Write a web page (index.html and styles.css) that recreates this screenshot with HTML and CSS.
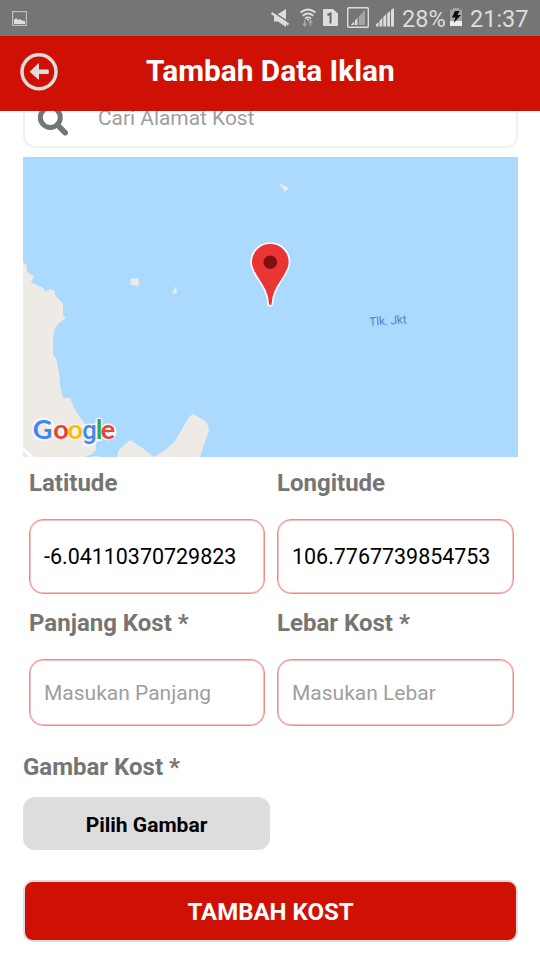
FILE: index.html
```html
<!DOCTYPE html>
<html lang="id">
<head>
<meta charset="utf-8">
<title>Tambah Data Iklan</title>
<link rel="stylesheet" href="styles.css">
</head>
<body>
<div class="status">
  <svg class="status-icons" width="396" height="36" viewBox="0 0 396 36">
    <rect x="12.6" y="11.6" width="13.8" height="13.8" fill="none" stroke="#bdbdbd" stroke-width="1.2"/>
    <path d="M14 24v-4l2-2 2 2 2-1 2 1.500 3 0.500v3z" fill="#ddd"/>
    <path d="M274 14h4l8-5v18l-8-5.500h-4z" fill="#ddd"/>
    <path d="M272 11.300l17 11" stroke="#757575" stroke-width="1.600"/>
    <path d="M271.500 13l17 11.500" stroke="#ddd" stroke-width="2.200"/>
    <path d="M300.500 12.500q7.500-6 15 0M302.700 15.700q5.300-4.300 10.600 0M305 18.500q3-2.200 6 0" fill="none" stroke="#ddd" stroke-width="1.800"/>
    <path d="M306.500 19h3l-1.500 2z" fill="#ddd"/>
    <path d="M304.700 20v5M302.800 23.500l1.900 2.200 1.900-2.200M310.500 26v-5M308.700 22.800l1.900-2.200 1.900 2.200" fill="none" stroke="#a8a8a8" stroke-width="1.300"/>
    <path d="M324 9h9l5 4.500V25q0 1-1 1h-13q-1 0-1-1V10q0-1 1-1z" fill="#ddd"/>
    <path d="M327.500 15l3-1.500v10" fill="none" stroke="#666" stroke-width="2"/>
    <rect x="347.700" y="7.700" width="20.600" height="19.600" rx="1" fill="none" stroke="#ddd" stroke-width="1.400"/>
    <path d="M351 25L365 10v15z" fill="#a5a5a5"/>
    <path d="M351 25l6-6.500V25z" fill="#ddd"/>
    <path d="M354.500 20v5M358.500 16v9" stroke="#757575" stroke-width="0.800"/>
    <path d="M376 26.500v-2l2.500-2.500v4.500zM379.500 26.500V21l2.800-3v8.500zM383.300 26.500V17l2.900-3v12.500zM387.200 26.500V13.500l2.800-2.500v15.500zM391 26.500V10l3-2v18.500z" fill="#ddd"/>
  </svg>
  <span class="battery-level">28%</span>
  <svg class="battery" width="12" height="18" viewBox="0 0 12 18">
    <path d="M0 1.500h3V0h6v1.500h3V18H0z" fill="#a3a3a3"/>
    <path d="M0 13h12v5H0z" fill="#eee"/>
    <path d="M5 3h4.500L7.500 7H11l-7.500 8L5.500 9.500H2z" fill="#080808"/>
  </svg>
  <span class="clock">21:37</span>
</div>
<header class="bar">
  <svg class="back" width="38" height="38" viewBox="0 0 38 38">
    <circle cx="19" cy="18.700" r="17" fill="none" stroke="#ddd" stroke-width="3.500"/>
    <path d="M9.700 18.700L18 10.500q1-.6 1 .6v5.400h8.800q1 0 1 1v2.400q0 1-1 1H19v5q0 1.200-1 .4z" fill="#ddd"/>
  </svg>
  <h1>Tambah Data Iklan</h1>
</header>
<main class="page">
  <div class="search">
    <svg width="32" height="32" viewBox="0 0 32 32" fill="none" stroke="#757575">
      <circle cx="13.300" cy="12.500" r="10" stroke-width="5"/>
      <path d="M21 20.500l7.200 7.200" stroke-width="5.500" stroke-linecap="round"/>
    </svg>
    <span>Cari Alamat Kost</span>
  </div>
  <svg class="map" width="495" height="300" viewBox="23 157 495 300">
    <rect x="23" y="157" width="495" height="300" fill="#acdaff"/>
    <g fill="#eeebe7">
      <path d="M23 262l4 4v6l7 4-3 6 12 6 3 4 4-3 5 2v4l8 9v11l3 3-6 4-5 6-2 10v17l3 3 3 15 1 12 3 13h7l5 12 10 14 6 7 5 12v7l-4 4-7 3H23z"/>
      <path d="M91 457q4-2 10 0z"/>
      <path d="M117 457q0-6 4-9l9-8 11 7 13 10z"/>
      <path d="M154 457l10-6 11-10 10-17q5-9 8-10l12 7q3 3 4 9l-5 15-4 12z"/>
      <path d="M130 279l8-1 1 8-8-1zM172 294l4-8 1 7-4 1zM279 183l10 5-4 4z"/>
    </g>
    <path d="M22 448l12 11" stroke="#fff" stroke-width="2.500"/>
    <text class="sea-label" x="369.500" y="326" transform="rotate(-4 370 326)" textLength="37.500">Tlk. Jkt</text>
    <path d="M270.300 243.300c-11 0-19.200 8.400-19.200 19 0 13.500 16.800 22.500 17.200 42.500q2 2 4 0c.4-20 17.200-29 17.200-42.500 0-10.600-8.200-19-19.200-19z" fill="#ea3535" stroke="#fff" stroke-width="1.600"/>
    <circle cx="270.300" cy="262.300" r="6.800" fill="#801010"/>
    <g fill="none" stroke="#f4f5f5" stroke-width="7" stroke-linejoin="round" stroke-linecap="round">
      <circle cx="43.500" cy="429.500" r="8.500"/>
      <circle cx="61" cy="432" r="5"/>
      <circle cx="75.200" cy="432" r="5"/>
      <circle cx="89.200" cy="432" r="5"/>
      <path d="M94 427v11q0 5-5 5h-3M99 421v17"/>
      <circle cx="108" cy="432" r="5"/>
    </g>
    <text class="logo" y="439.300"><tspan x="32.800" fill="#4285f4">G</tspan><tspan x="53.200" fill="#ea4335">o</tspan><tspan x="67.400" fill="#fbbc05">o</tspan><tspan class="logo-g" x="82.300" fill="#4285f4">g</tspan><tspan x="95.700" fill="#34a853">l</tspan><tspan x="100.800" fill="#ea4335">e</tspan></text>
  </svg>
  <div class="fields">
    <label>Latitude</label>
    <label>Longitude</label>
    <div class="input tall">-6.04110370729823</div>
    <div class="input tall">106.7767739854753</div>
    <label class="second">Panjang Kost *</label>
    <label class="second">Lebar Kost *</label>
    <div class="input empty">Masukan Panjang</div>
    <div class="input empty">Masukan Lebar</div>
  </div>
  <p class="caption">Gambar Kost *</p>
  <div class="pick">Pilih Gambar</div>
  <div class="submit">TAMBAH KOST</div>
</main>
</body>
</html>
```
FILE: styles.css
```css
* { box-sizing: border-box; }

body {
  margin: 0;
  width: 540px;
  height: 960px;
  overflow: hidden;
  display: flex;
  flex-direction: column;
  background: #fff;
  font-family: Roboto, sans-serif;
}

svg { display: block; flex: none; }

.status {
  flex: none;
  height: 36px;
  display: flex;
  align-items: center;
  background: #757575;
  color: #ddd;
  font-size: 23.5px;
  line-height: 36px;
  white-space: nowrap;
}

.battery-level { width: 48px; margin-left: 6px; padding-top: 2px; }
.battery { margin-top: -2px; }
.clock { margin-left: 8px; padding-top: 2px; }

.bar {
  flex: none;
  height: 75px;
  display: flex;
  align-items: center;
  padding-left: 20px;
  background: #cf1004;
}

.back { margin-top: -3px; }

h1 {
  margin: -5px 0 0 88px;
  color: #fff;
  font-size: 29.8px;
  line-height: 36px;
  font-weight: 700;
  white-space: nowrap;
}

.page {
  flex: 1;
  min-height: 0;
  overflow: hidden;
  padding: 0 22px 0 23px;
}

.search {
  height: 66px;
  margin-top: -29px;
  display: flex;
  align-items: center;
  gap: 29px;
  padding: 12px 0 0 12px;
  border: 2px solid #f1f1f1;
  border-radius: 12px;
  color: #9e9e9e;
  font-size: 20.9px;
}

.search span { margin-top: -7px; }

.map { margin-top: 9px; }

.sea-label { font-size: 12px; fill: #5484ca; }

.logo {
  font-family: Lato, sans-serif;
  font-size: 27px;
  font-weight: 700;
}

.logo-g {
  font-family: Roboto, sans-serif;
  font-size: 25.5px;
  font-weight: 500;
}

.fields {
  display: grid;
  grid-template-columns: 236px 237px;
  column-gap: 12px;
  padding: 11px 0 0 6px;
}

label {
  height: 51px;
  color: #757575;
  font-size: 24px;
  line-height: 30px;
  font-weight: 700;
}

.second { height: 44px; margin: 14px 0 7px; }

.input {
  height: 67px;
  padding-left: 14px;
  border: 1px solid #ee8c88;
  border-radius: 14px;
  box-shadow: inset 0 0 0 1px #f8c0be;
  color: #000;
  font-size: 21px;
  line-height: 67px;
}

.tall { height: 75px; font-size: 21.450px; line-height: 73px; }
.empty { color: #9e9e9e; }

.caption {
  margin: 26px 0 15px;
  color: #757575;
  font-size: 24px;
  line-height: 30px;
  font-weight: 700;
}

.pick {
  width: 247px;
  height: 53px;
  border-radius: 12px;
  background: #ddd;
  color: #000;
  font-size: 21px;
  line-height: 56px;
  font-weight: 700;
  text-align: center;
}

.submit {
  height: 62px;
  margin-top: 30px;
  border: 2.500px solid #ddd;
  border-radius: 10px;
  background: #cf1004;
  color: #fff;
  font-size: 24px;
  line-height: 61px;
  font-weight: 700;
  text-align: center;
}
```
